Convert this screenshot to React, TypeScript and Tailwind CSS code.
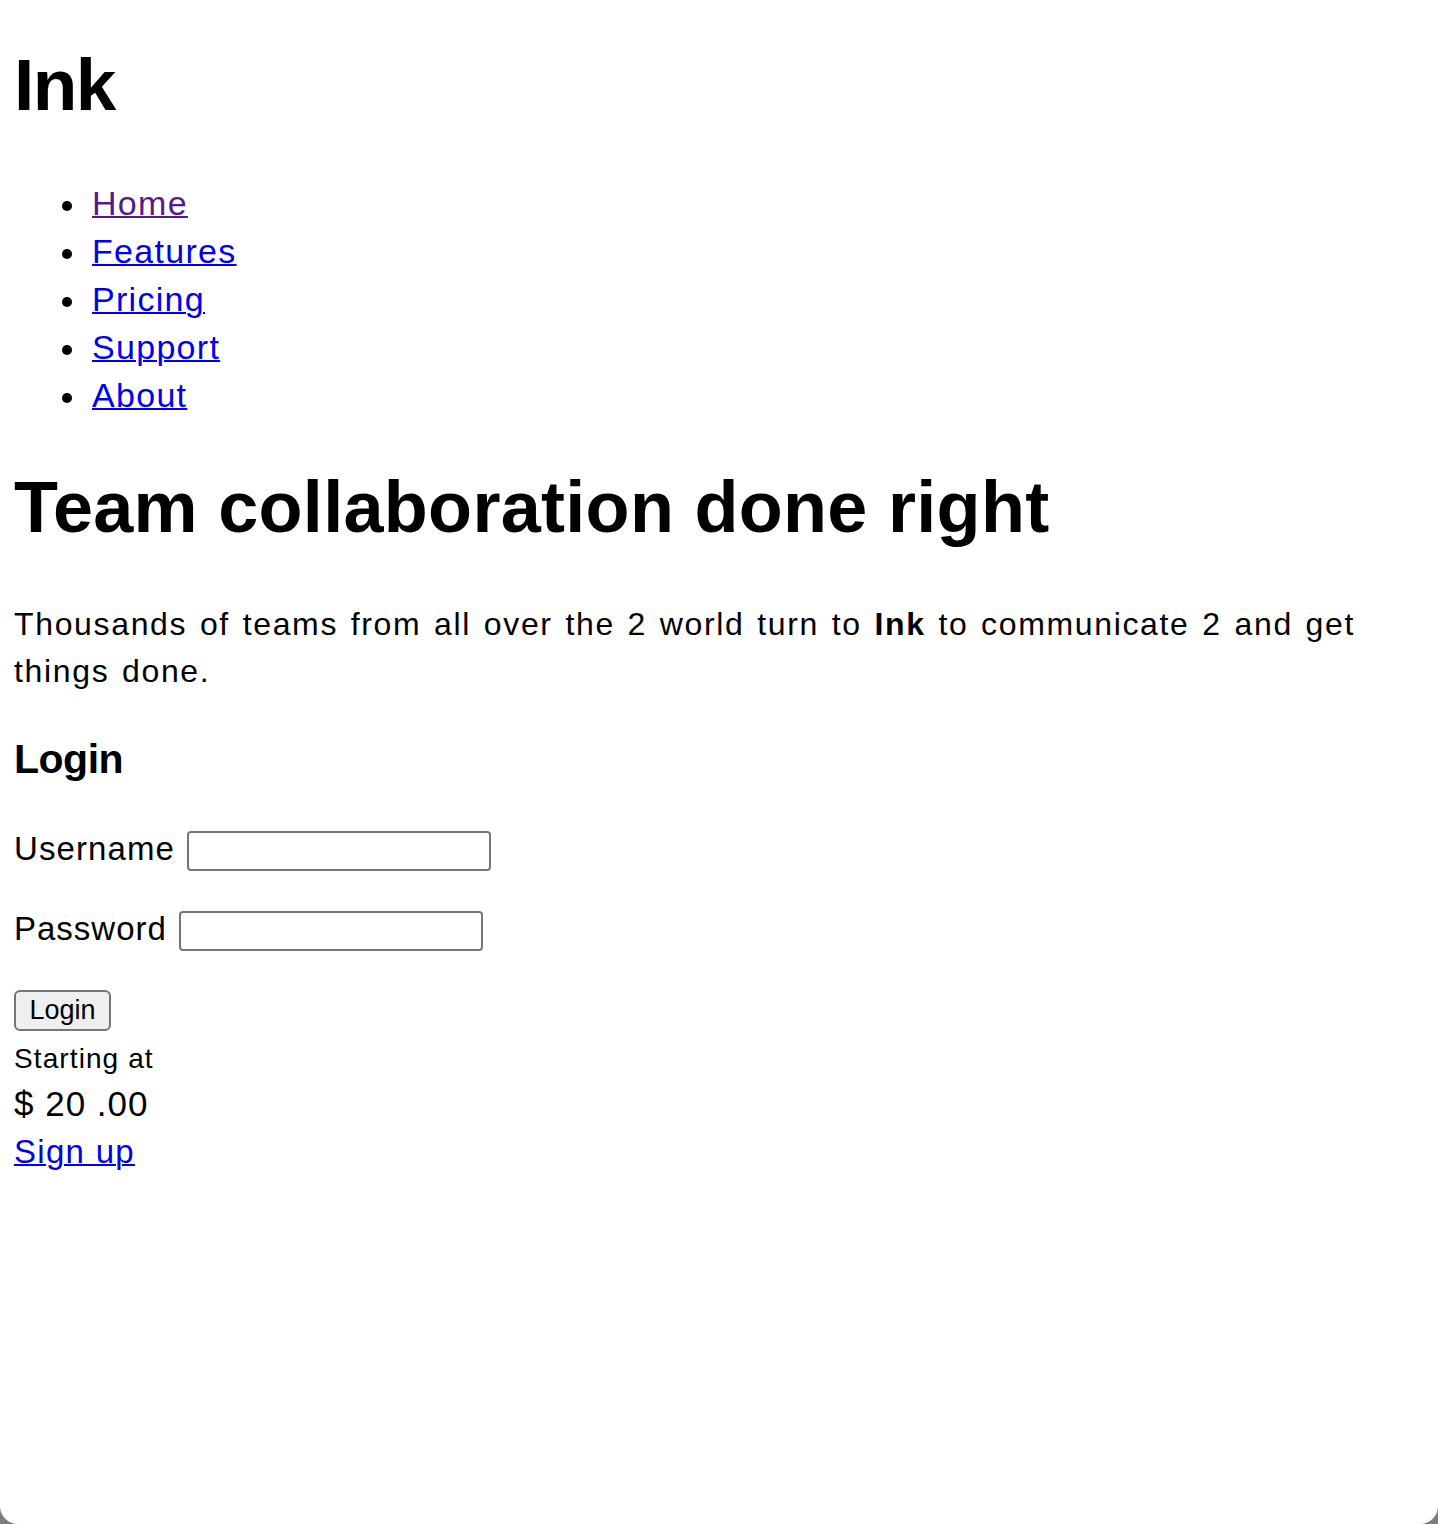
import React from "react";

const navItems = [
  { label: "Home", visited: true },
  { label: "Features", visited: false },
  { label: "Pricing", visited: false },
  { label: "Support", visited: false },
  { label: "About", visited: false },
];

export default function App() {
  return (
    <div className="h-[1524px] w-full bg-[#7d7d7d]">
      <div className="h-full w-full overflow-hidden rounded-b-[18px] bg-white pl-[14px] pt-[45px] text-black font-['Liberation_Sans',Arial,sans-serif]">
        <h1 className="text-[73px] font-bold leading-[80px] tracking-[-1.5px]">Ink</h1>

        <ul className="mt-[54px]">
          {navItems.map((item) => (
            <li key={item.label} className="flex h-[48px] items-center">
              <span className="ml-[48px] mt-[5px] h-[10px] w-[10px] shrink-0 rounded-full bg-black" />
              <a
                href="#"
                className={
                  item.visited
                    ? "ml-[20px] text-[34px] leading-[48px] tracking-[1.3px] text-[#551a8b] underline decoration-2"
                    : "ml-[20px] text-[34px] leading-[48px] tracking-[1.3px] text-[#0000ee] underline decoration-2"
                }
              >
                {item.label}
              </a>
            </li>
          ))}
        </ul>

        <h1 className="mt-[48px] whitespace-nowrap text-[72px] font-bold leading-[80px] tracking-[0.3px]">
          Team collaboration done right
        </h1>

        <p className="mt-[54px] text-[32px] leading-[47px] tracking-[1.65px] [word-spacing:2.2px]">
          Thousands of teams from all over the 2 world turn to <b>Ink</b> to communicate 2 and get
          <br />
          things done.
        </p>

        <h2 className="mt-[39px] text-[41px] font-bold leading-[50px] tracking-[-0.5px]">Login</h2>

        <div className="mt-[47px] flex items-start">
          <label className="text-[33px] leading-[36px] tracking-[1.1px]">Username</label>
          <input
            type="text"
            className="ml-[12px] h-[40px] w-[304px] rounded-[4px] border-2 border-[#767676] bg-white"
          />
        </div>

        <div className="mt-[40px] flex items-start">
          <label className="text-[33px] leading-[36px] tracking-[1px]">Password</label>
          <input
            type="password"
            className="ml-[12px] h-[40px] w-[304px] rounded-[4px] border-2 border-[#767676] bg-white"
          />
        </div>

        <div className="mt-[39px]">
          <button className="flex h-[41px] w-[97px] items-center justify-center rounded-[6px] border-2 border-[#767676] bg-[#efefef] text-[27px] leading-none text-black">
            Login
          </button>
        </div>

        <div className="mt-[10px] text-[28px] leading-[36px] tracking-[1.1px]">Starting at</div>
        <div className="mt-[5px] text-[35px] leading-[44px] tracking-[1px]">$ 20 .00</div>
        <div className="mt-[4px] text-[33px] leading-[44px] tracking-[1.3px]">
          <a href="#" className="text-[#0000ee] underline decoration-2">
            Sign up
          </a>
        </div>
      </div>
    </div>
  );
}
